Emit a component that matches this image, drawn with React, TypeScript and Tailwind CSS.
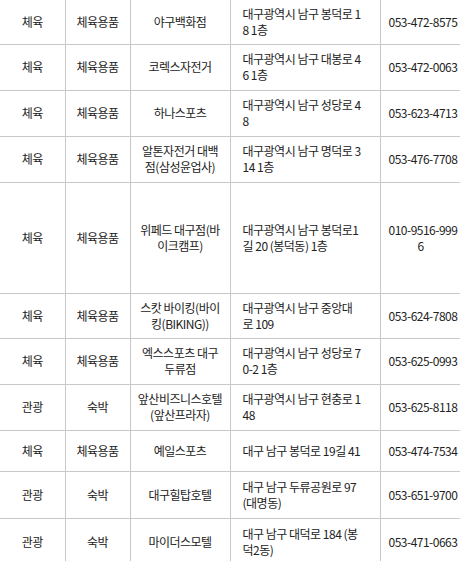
type Row = {
  cat: string;
  sub: string;
  name: string[];
  addr: string[];
  tel: string[];
  h: string;
};

const rows: Row[] = [
  { cat: "체육", sub: "체육용품", name: ["야구백화점"], addr: ["대구광역시 남구 봉덕로 1", "8 1층"], tel: ["053-472-8575"], h: "h-[44px]" },
  { cat: "체육", sub: "체육용품", name: ["코렉스자전거"], addr: ["대구광역시 남구 대봉로 4", "6 1층"], tel: ["053-472-0063"], h: "h-[46px]" },
  { cat: "체육", sub: "체육용품", name: ["하나스포츠"], addr: ["대구광역시 남구 성당로 4", "8"], tel: ["053-623-4713"], h: "h-[46px]" },
  { cat: "체육", sub: "체육용품", name: ["알톤자전거 대백", "점(삼성윤업사)"], addr: ["대구광역시 남구 명덕로 3", "14 1층"], tel: ["053-476-7708"], h: "h-[46px]" },
  { cat: "체육", sub: "체육용품", name: ["위페드 대구점(바", "이크캠프)"], addr: ["대구광역시 남구 봉덕로1", "길 20 (봉덕동) 1층"], tel: ["010-9516-999", "6"], h: "h-[111px]" },
  { cat: "체육", sub: "체육용품", name: ["스캇 바이킹(바이", "킹(BIKING))"], addr: ["대구광역시 남구 중앙대", "로 109"], tel: ["053-624-7808"], h: "h-[45px]" },
  { cat: "체육", sub: "체육용품", name: ["엑스스포츠 대구", "두류점"], addr: ["대구광역시 남구 성당로 7", "0-2 1층"], tel: ["053-625-0993"], h: "h-[46px]" },
  { cat: "관광", sub: "숙박", name: ["앞산비즈니스호텔", "(앞산프라자)"], addr: ["대구광역시 남구 현충로 1", "48"], tel: ["053-625-8118"], h: "h-[46px]" },
  { cat: "체육", sub: "체육용품", name: ["예일스포츠"], addr: ["대구 남구 봉덕로 19길 41"], tel: ["053-474-7534"], h: "h-[41px]" },
  { cat: "관광", sub: "숙박", name: ["대구힐탑호텔"], addr: ["대구 남구 두류공원로 97", "(대명동)"], tel: ["053-651-9700"], h: "h-[47px]" },
  { cat: "관광", sub: "숙박", name: ["마이더스모텔"], addr: ["대구 남구 대덕로 184 (봉", "덕2동)"], tel: ["053-471-0663"], h: "h-[47px]" },
];

function Lines({ items }: { items: string[] }) {
  return (
    <>
      {items.map((t, i) => (
        <div key={i} className="whitespace-nowrap">
          {t}
        </div>
      ))}
    </>
  );
}

export default function App() {
  return (
    <div className="w-[460px] h-[561px] overflow-hidden bg-white">
      <table
        className="table-fixed border-collapse w-[470px] text-[12px] leading-[16px] text-[#222] tracking-[-0.5px]"
        style={{ fontFamily: '"Noto Sans CJK KR", "Noto Sans", sans-serif' }}
      >
        <colgroup>
          <col className="w-[65px]" />
          <col className="w-[65px]" />
          <col className="w-[100px]" />
          <col className="w-[150px]" />
          <col className="w-[90px]" />
        </colgroup>
        <tbody>
          {rows.map((r, i) => (
            <tr key={i} className={r.h}>
              <td className={`border-[#c8c8c8] border-r border-b text-center align-middle ${i === 0 ? "" : "border-t"}`}>
                {r.cat}
              </td>
              <td className={`border-[#c8c8c8] border-x border-b text-center align-middle ${i === 0 ? "" : "border-t"}`}>
                {r.sub}
              </td>
              <td className={`border-[#c8c8c8] border-x border-b text-center align-middle ${i === 0 ? "" : "border-t"}`}>
                <Lines items={r.name} />
              </td>
              <td className={`border-[#c8c8c8] border-x border-b text-left align-middle pl-[12px] ${i === 0 ? "" : "border-t"}`}>
                <Lines items={r.addr} />
              </td>
              <td className={`border-[#c8c8c8] border-x border-b text-left align-middle pl-[8px] ${i === 0 ? "" : "border-t"}`}>
                <div className="w-[64px] text-center">
                  <Lines items={r.tel} />
                </div>
              </td>
            </tr>
          ))}
        </tbody>
      </table>
    </div>
  );
}
